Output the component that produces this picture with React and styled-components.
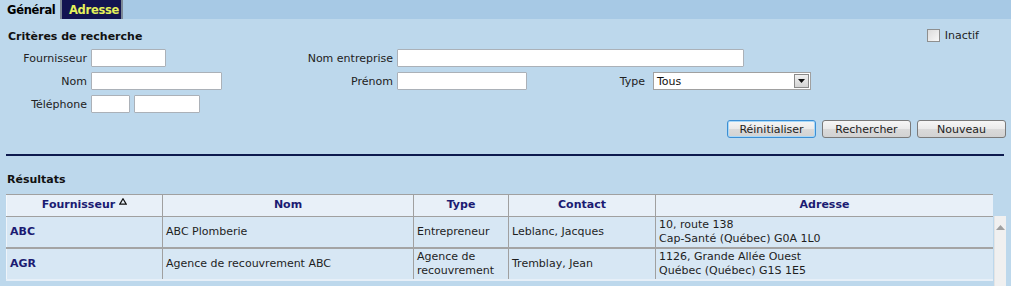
import React from 'react';
import styled, { createGlobalStyle, css } from 'styled-components';

const GlobalStyle = createGlobalStyle`
  html, body {
    margin: 0;
    padding: 0;
    background: #bdd8ec;
  }
  body {
    font-family: "DejaVu Sans", Verdana, sans-serif;
    font-size: 11px;
    color: #1e1e1e;
  }
`

const Page = styled.div`
  width: 1011px;
  height: 286px;
  overflow: hidden;
  background: #bdd8ec;
`

const TabBar = styled.div`
  display: flex;
  height: 19px;
  background: #a7c9e5;
`

const Tab = styled.div`
  display: flex;
  align-items: center;
  box-sizing: border-box;
  width: ${props => props.active ? 62 : 61}px;
  padding-left: 7px;
  font-weight: bold;
  font-size: 11.5px;
  letter-spacing: -0.3px;
  border-right: 2px solid #7c8896;
  ${props => props.active ? css`
    background: #bdd8ec;
    color: #000;
  ` : css`
    background: #121451;
    color: #e4f25a;
  `}
`

const Panel = styled.div`
  padding: 9px 5px 0 8px;
`

const TitleRow = styled.div`
  display: flex;
  justify-content: space-between;
  align-items: center;
  height: 16px;
`

const Title = styled.div`
  font-weight: bold;
  color: #111;
`

const CheckLabel = styled.label`
  display: flex;
  align-items: center;
  gap: 5px;
  margin-right: 27px;
  margin-top: -2px;
`

const CheckBox = styled.span`
  width: 11px;
  height: 11px;
  border: 1px solid #8e8f8f;
  background: linear-gradient(135deg, #dcdcdc, #f8f8f8);
`

const Form = styled.div`
  display: grid;
  grid-template-columns: 83px 130px 176px 130px 126px 158px;
  grid-auto-rows: 18px;
  row-gap: 5px;
  margin-top: 5px;
`

const Label = styled.div`
  display: flex;
  align-items: center;
  justify-content: flex-end;
  padding-right: ${props => props.gap || 4}px;
  color: #222;
  grid-column: ${props => props.col};
`

const Field = styled.div`
  height: 18px;
  box-sizing: border-box;
  background: #fff;
  border: 1px solid #abb1b8;
  border-radius: 1px;
  width: ${props => props.w}px;
  grid-column: ${props => props.col};
`

const PhoneRow = styled.div`
  display: flex;
  gap: 4px;
  grid-column: 2 / span 2;
`

const Select = styled.div`
  display: flex;
  align-items: center;
  justify-content: space-between;
  height: 18px;
  box-sizing: border-box;
  width: 158px;
  background: #fff;
  border: 1px solid #a0a0a0;
  padding-left: 3px;
  color: #111;
`

const SelectArrow = styled.span`
  display: flex;
  align-items: center;
  justify-content: center;
  width: 15px;
  height: 14px;
  margin-right: 1px;
  border: 1px solid #8a8a8a;
  background: linear-gradient(#f0f0f0, #d4d4d4);
  box-sizing: border-box;
`

const Actions = styled.div`
  display: flex;
  justify-content: flex-end;
  gap: 6px;
  margin-top: 7px;
`

const Button = styled.div`
  display: flex;
  align-items: center;
  justify-content: center;
  width: 89px;
  height: 18px;
  box-sizing: border-box;
  border: 1px solid ${props => props.focused ? '#3c8fd4' : '#7a7a7a'};
  border-radius: 3px;
  background: linear-gradient(#f6f6f6 0%, #eaeaea 50%, #dadada 51%, #d2d2d2 100%);
  color: #222;
  box-shadow: ${props => props.focused ? 'inset 0 0 0 1px #a8d8f8' : 'none'};
`

const Divider = styled.div`
  height: 2px;
  background: #0d1a4e;
  margin: 16px 2px 0 -2px;
`

const ResultsTitle = styled.div`
  font-weight: bold;
  color: #111;
  margin: 17px 0 0 -1px;
  height: 14px;
`

const Results = styled.div`
  margin: 7px 0 0 -2px;
`

const cols = '156px 251px 95px 147px 338px'

const HeadRow = styled.div`
  display: grid;
  grid-template-columns: ${cols};
  width: 987px;
  height: 23px;
  box-sizing: border-box;
  border-top: 1px solid #a0a0a0;
  border-bottom: 1px solid #a0a0a0;
  background: #e8f0f8;
`

const HeadCell = styled.div`
  display: flex;
  align-items: center;
  justify-content: center;
  gap: 4px;
  font-weight: bold;
  color: #1b1b72;
  border-left: 1px solid ${props => props.first ? '#f4f8fc' : '#a0a0a0'};
  padding-bottom: 2px;
`

const SortMark = styled.svg`
  align-self: flex-start;
  margin-top: 3px;
`

const BodyWrap = styled.div`
  display: flex;
`

const Rows = styled.div`
  width: 987px;
`

const Row = styled.div`
  display: grid;
  grid-template-columns: ${cols};
  height: 32px;
  box-sizing: border-box;
  border-bottom: 2px solid ${props => props.last ? '#e6eff8' : '#a4a4a4'};
  background: #d7e7f4;
`

const Cell = styled.div`
  display: flex;
  flex-direction: column;
  justify-content: center;
  padding-left: 3px;
  line-height: 14px;
  color: #1e1e1e;
  border-left: 1px solid ${props => props.first ? '#eef4fa' : '#a0a0a0'};
  ${props => props.code && css`
    font-weight: bold;
    color: #1b1b72;
  `}
`

const Scrollbar = styled.div`
  width: 17px;
  height: 80px;
  margin: -1px 0 0 1px;
  background: #f0f0f0;
  border-left: 1px solid #e4e4e4;
  display: flex;
  justify-content: center;
  padding-top: 9px;
  box-sizing: border-box;
`

const SortIcon = () => (
  <SortMark width="8" height="7" viewBox="0 0 8 7">
    <path d="M4 0.8 L7.2 6.2 L0.8 6.2 Z" fill="none" stroke="#111" strokeWidth="1.2" />
  </SortMark>
)

const results = [
  { code: 'ABC', nom: 'ABC Plomberie', type: ['Entrepreneur'], contact: 'Leblanc, Jacques', adresse: ['10, route 138', 'Cap-Santé (Québec) G0A 1L0'] },
  { code: 'AGR', nom: 'Agence de recouvrement ABC', type: ['Agence de', 'recouvrement'], contact: 'Tremblay, Jean', adresse: ['1126, Grande Allée Ouest', 'Québec (Québec) G1S 1E5'] },
]

export default function App() {
  return (
    <Page>
      <GlobalStyle />
      <TabBar>
        <Tab active>Général</Tab>
        <Tab>Adresse</Tab>
      </TabBar>
      <Panel>
        <TitleRow>
          <Title>Critères de recherche</Title>
          <CheckLabel><CheckBox />Inactif</CheckLabel>
        </TitleRow>
        <Form>
          <Label col={1}>Fournisseur</Label>
          <Field col={2} w={75} />
          <Label col={3}>Nom entreprise</Label>
          <Field col="4 / span 3" w={347} />

          <Label col={1}>Nom</Label>
          <Field col={2} w={131} />
          <Label col={3}>Prénom</Label>
          <Field col={4} w={130} />
          <Label col={5} gap={8}>Type</Label>
          <Select>
            Tous
            <SelectArrow>
              <svg width="7" height="4" viewBox="0 0 7 4"><path d="M0 0 H7 L3.5 4 Z" fill="#111" /></svg>
            </SelectArrow>
          </Select>

          <Label col={1}>Téléphone</Label>
          <PhoneRow>
            <Field w={39} />
            <Field w={66} />
          </PhoneRow>
        </Form>
        <Actions>
          <Button focused>Réinitialiser</Button>
          <Button>Rechercher</Button>
          <Button>Nouveau</Button>
        </Actions>
        <Divider />
        <ResultsTitle>Résultats</ResultsTitle>
        <Results>
          <HeadRow>
            <HeadCell first>Fournisseur<SortIcon /></HeadCell>
            <HeadCell>Nom</HeadCell>
            <HeadCell>Type</HeadCell>
            <HeadCell>Contact</HeadCell>
            <HeadCell>Adresse</HeadCell>
          </HeadRow>
          <BodyWrap>
            <Rows>
              {results.map((r, i) => (
                <Row key={r.code} last={i === results.length - 1}>
                  <Cell first code>{r.code}</Cell>
                  <Cell>{r.nom}</Cell>
                  <Cell>{r.type.map(t => <span key={t}>{t}</span>)}</Cell>
                  <Cell>{r.contact}</Cell>
                  <Cell>{r.adresse.map(a => <span key={a}>{a}</span>)}</Cell>
                </Row>
              ))}
            </Rows>
            <Scrollbar>
              <svg width="9" height="5" viewBox="0 0 9 5"><path d="M4.5 0 L9 5 H0 Z" fill="#a0a0a0" /></svg>
            </Scrollbar>
          </BodyWrap>
        </Results>
      </Panel>
    </Page>
  );
}
